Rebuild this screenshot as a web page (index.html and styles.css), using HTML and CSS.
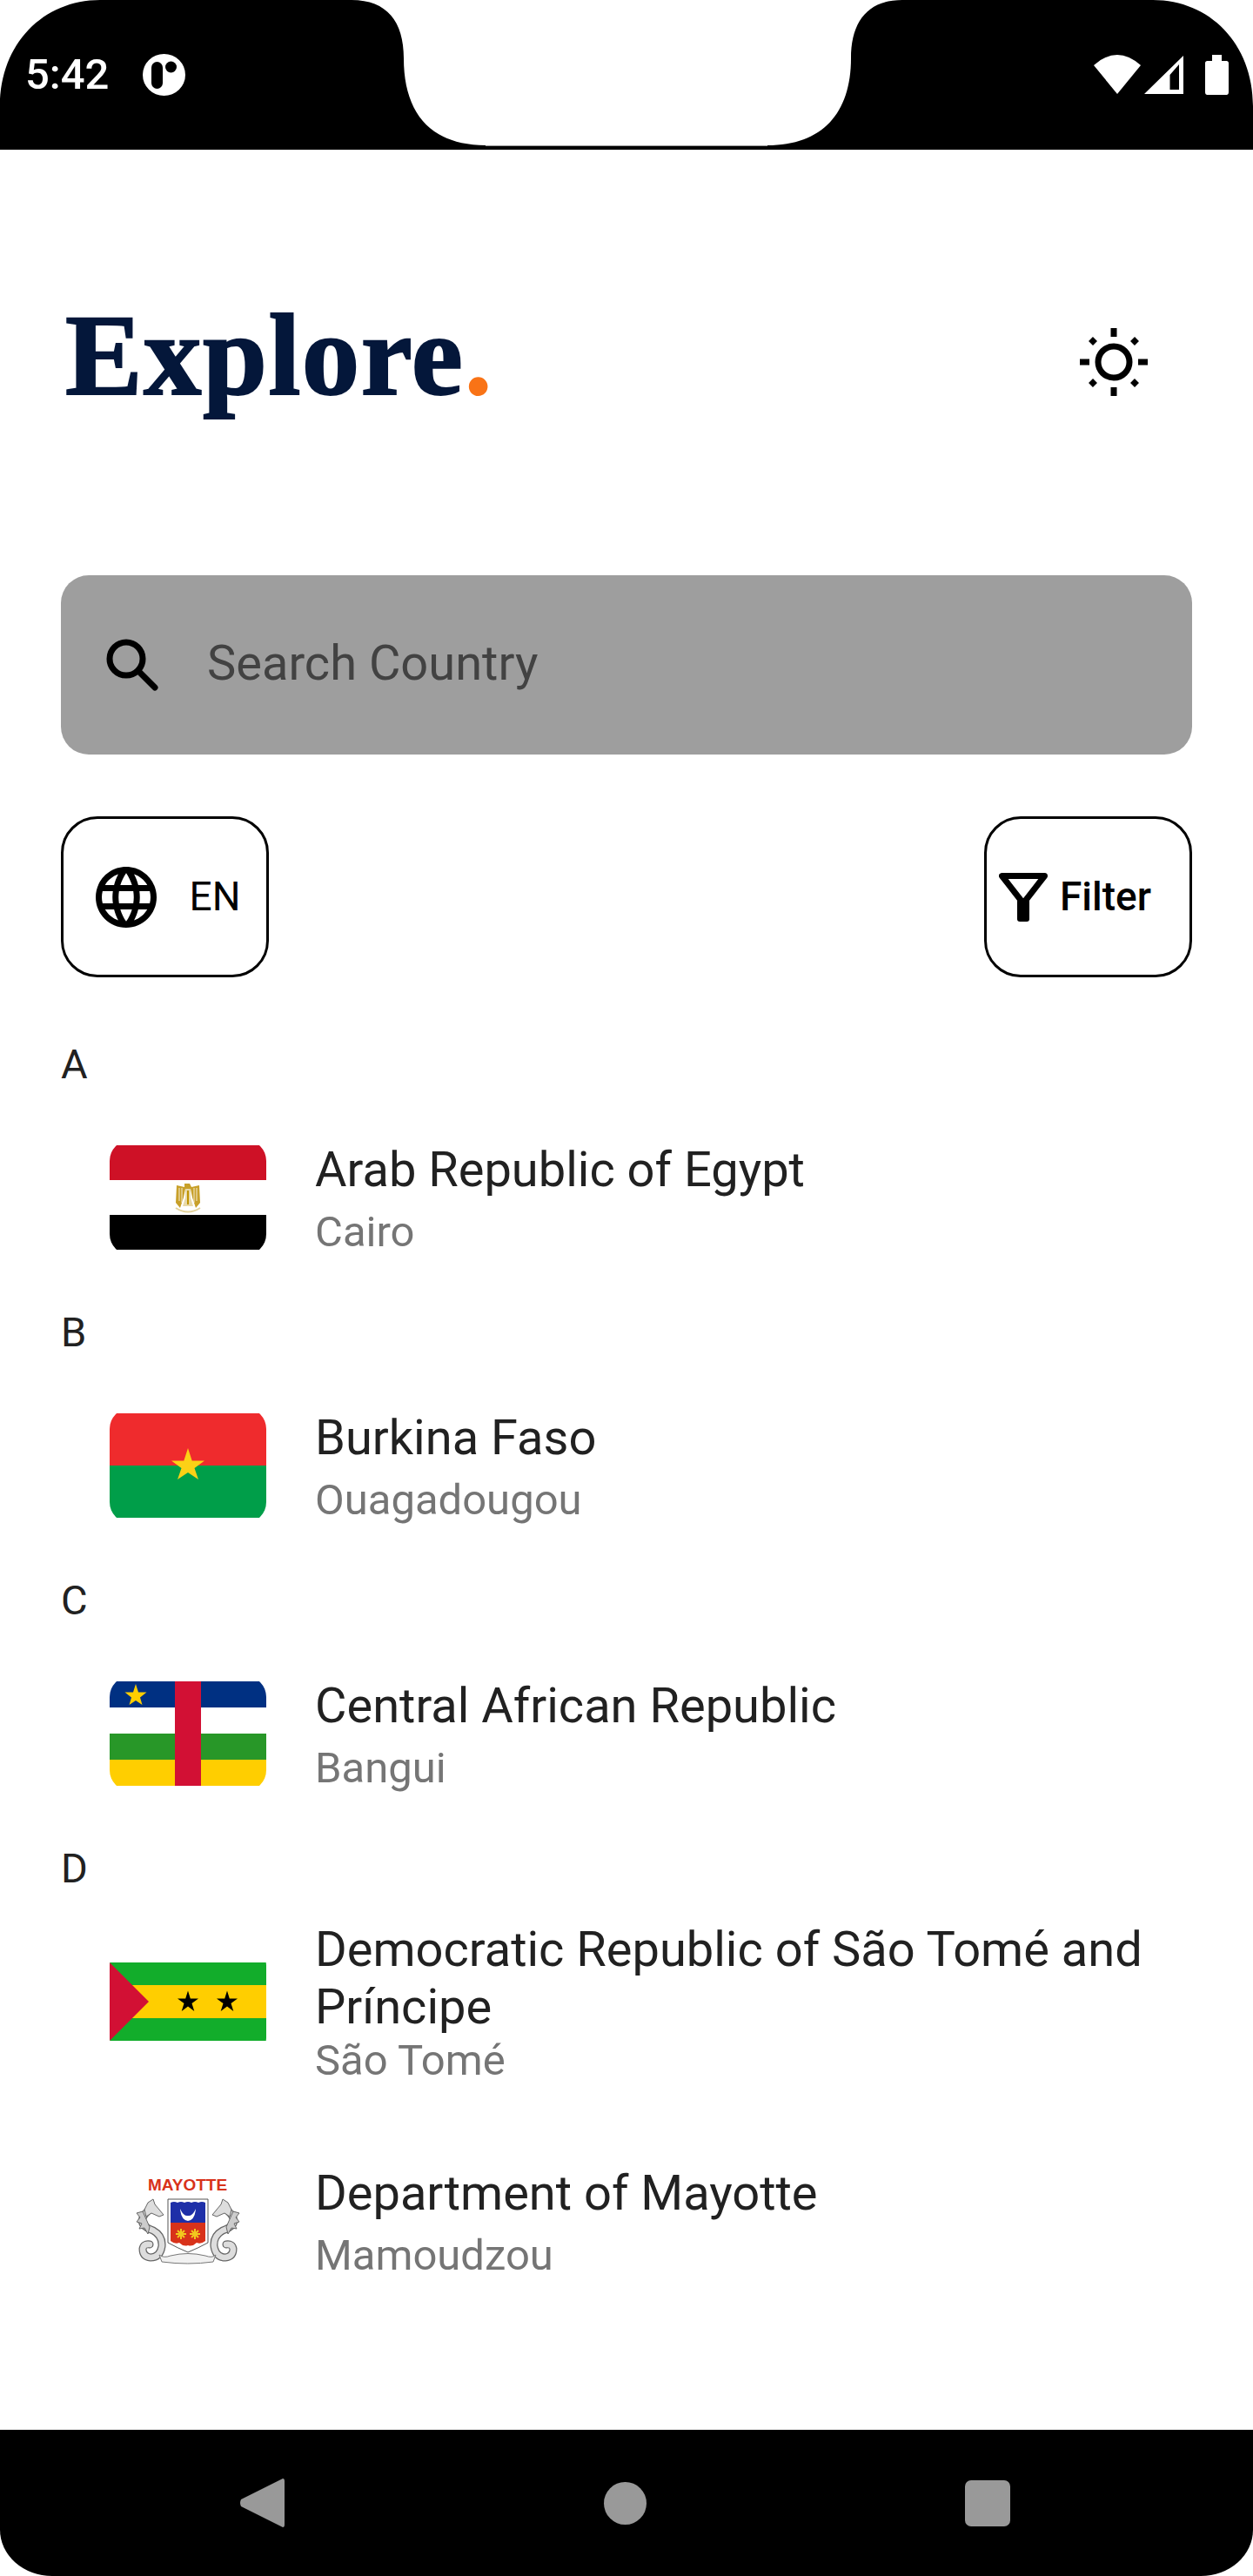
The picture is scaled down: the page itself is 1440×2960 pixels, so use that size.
FILE: index.html
```html
<!DOCTYPE html>
<html lang="en">
<head>
<meta charset="utf-8">
<title>Explore</title>
<link rel="stylesheet" href="styles.css">
</head>
<body>
<div class="screen">
  <header class="statusbar">
    <svg class="status-shape" width="1440" height="172" viewBox="0 0 1440 172"><path fill="#000" d="M0 172V122C0 50 50 0 115 0H404C445 0 464 25 464 67C464 130 495 167 558 167H882C945 167 978 130 978 67C978 25 997 0 1037 0H1325C1390 0 1440 50 1440 122V172Z"/><path fill="none" stroke="#999" stroke-width="1" d="M558 167.5H882"/></svg>
    <div class="status-left">
      <span class="clock">5:42</span>
      <svg class="mini" width="49" height="48" viewBox="0 0 49 48"><ellipse cx="24.500" cy="24" rx="24.500" ry="24" fill="#fff"/><rect x="10" y="9" width="13" height="31" rx="6.500" fill="#000"/><circle cx="32.500" cy="15" r="6.500" fill="#000"/></svg>
    </div>
    <div class="status-right">
      <svg width="54" height="46" viewBox="0 0 54 46"><path fill="#fff" d="M0 12Q27 -12 54 12L27 45Z"/></svg>
      <svg width="45" height="46" viewBox="0 0 45 46"><path fill="#fff" fill-rule="evenodd" d="M45 1V45H0ZM40 11L29.500 23V40H40Z"/></svg>
      <svg class="battery" width="27" height="46" viewBox="0 0 27 46"><path fill="#fff" d="M8 0H19V7H24.500C26 7 27 8 27 9.500V43C27 44.800 26 46 24.500 46H2.500C1 46 0 44.800 0 43V9.500C0 8 1 7 2.500 7H8Z"/></svg>
    </div>
  </header>

  <main class="content">
    <div class="topline">
      <div class="logo">Explore<span class="logo-dot">.</span></div>
      <svg class="sun" width="78" height="78" viewBox="0 0 78 78"><circle cx="39" cy="39" r="18" fill="none" stroke="#000" stroke-width="7"/><path fill="none" stroke="#000" stroke-width="7" d="M39 0V10M39 68V78M0 39H11M67 39H78M12.500 12.500L17.500 17.500M65.500 12.500L60.500 17.500M12.500 65.500L17.500 60.500M65.500 65.500L60.500 60.500"/></svg>
    </div>

    <div class="search">
      <svg class="search-icon" width="60" height="60" viewBox="0 0 60 60"><circle cx="23" cy="23" r="19" fill="none" stroke="#000" stroke-width="7"/><path fill="none" stroke="#000" stroke-width="7" stroke-linecap="round" d="M37 37L56 56"/></svg>
      <span class="search-text">Search Country</span>
    </div>

    <div class="actions">
      <button class="chip chip-lang">
        <svg width="84" height="84" viewBox="0 0 24 24"><path fill="#000" d="M11.990 2C6.470 2 2 6.480 2 12s4.470 10 9.990 10C17.520 22 22 17.520 22 12S17.520 2 11.990 2zm6.930 6h-2.950c-.32-1.250-.78-2.450-1.380-3.560 1.840.63 3.370 1.910 4.330 3.560zM12 4.040c.83 1.200 1.480 2.530 1.910 3.960h-3.820c.43-1.430 1.080-2.760 1.910-3.960zM4.260 14C4.100 13.360 4 12.690 4 12s.1-1.360.26-2h3.380c-.08.660-.14 1.320-.14 2 0 .680.060 1.340.14 2H4.260zm.820 2h2.950c.32 1.250.78 2.450 1.380 3.560-1.840-.63-3.370-1.900-4.330-3.560zm2.950-8H5.080c.96-1.660 2.490-2.930 4.330-3.560C8.810 5.550 8.350 6.750 8.030 8zM12 19.960c-.83-1.200-1.480-2.530-1.910-3.960h3.820c-.43 1.430-1.080 2.760-1.910 3.960zM14.340 14H9.660c-.09-.66-.16-1.320-.16-2 0-.680.070-1.350.16-2h4.680c.09.650.16 1.320.16 2 0 .680-.07 1.340-.16 2zm.250 5.560c.6-1.110 1.060-2.310 1.380-3.560h2.950c-.96 1.650-2.490 2.930-4.330 3.560zM16.360 14c.08-.66.14-1.320.14-2 0-.680-.06-1.340-.14-2h3.380c.16.640.26 1.310.26 2s-.1 1.360-.26 2h-3.380z"/></svg>
        <span class="chip-label">EN</span>
      </button>
      <button class="chip chip-filter">
        <svg width="56" height="56" viewBox="0 0 56 56"><path fill="none" stroke="#000" stroke-width="7" stroke-linejoin="round" d="M3.500 3.500H52.500L28 35Z"/><rect x="21" y="30" width="14" height="26" rx="3" fill="#000"/></svg>
        <span class="chip-label chip-label-strong">Filter</span>
      </button>
    </div>

    <section class="group">
      <div class="letter">A</div>
      <div class="row">
        <svg class="flag" width="180" height="120" viewBox="0 0 180 120"><defs><clipPath id="c1"><rect y="-6" width="180" height="132" rx="24"/></clipPath></defs><g clip-path="url(#c1)"><rect width="180" height="40" fill="#ce1126"/><rect y="40" width="180" height="40" fill="#fff"/><rect y="80" width="180" height="40" fill="#000"/><path fill="#c8a02a" d="M86 44H92L94 48L103 46L104 66L99 72L95 60L93 50H87L85 60L81 72L76 66L77 46L86 48Z"/><path fill="none" stroke="#fff" stroke-width="0.800" d="M80 49V64M83 49V66M97 49V66M100 49V64"/><path fill="#e8d9a8" d="M87 50H93V60L96 70H84L87 60Z"/><path fill="#c09300" d="M89 52H91V68H89Z"/><path fill="none" stroke="#e3d29a" stroke-width="2" d="M76 72Q90 81 104 72"/></g></svg>
        <div class="names">
          <div class="name">Arab Republic of Egypt</div>
          <div class="sub">Cairo</div>
        </div>
      </div>
    </section>

    <section class="group">
      <div class="letter">B</div>
      <div class="row">
        <svg class="flag" width="180" height="120" viewBox="0 0 180 120"><defs><clipPath id="c2"><rect y="-6" width="180" height="132" rx="24"/></clipPath></defs><g clip-path="url(#c2)"><rect width="180" height="60" fill="#ef2b2d"/><rect y="60" width="180" height="60" fill="#009e49"/><path fill="#fcd116" d="M90 40L94.700 54.500H109L97.500 63L102 76L90 68L78 76L82.500 63L71 54.500H85.300Z"/></g></svg>
        <div class="names">
          <div class="name">Burkina Faso</div>
          <div class="sub">Ouagadougou</div>
        </div>
      </div>
    </section>

    <section class="group">
      <div class="letter">C</div>
      <div class="row">
        <svg class="flag" width="180" height="120" viewBox="0 0 180 120"><defs><clipPath id="c3"><rect y="-6" width="180" height="132" rx="24"/></clipPath></defs><g clip-path="url(#c3)"><rect width="180" height="30" fill="#003082"/><rect y="30" width="180" height="30" fill="#fff"/><rect y="60" width="180" height="30" fill="#289728"/><rect y="90" width="180" height="30" fill="#ffce00"/><rect x="75" width="30" height="120" fill="#d21034"/><path fill="#ffce00" d="M30 3L33 12.500H42.500L35 18.500L37.500 27L30 22L22.500 27L25 18.500L17.500 12.500H27Z"/></g></svg>
        <div class="names">
          <div class="name">Central African Republic</div>
          <div class="sub">Bangui</div>
        </div>
      </div>
    </section>

    <section class="group">
      <div class="letter">D</div>
      <div class="row">
        <svg class="flag" width="180" height="120" viewBox="0 0 180 120"><defs><clipPath id="c4"><rect y="-6" width="180" height="132" rx="24"/></clipPath></defs><g clip-path="url(#c4)"><rect y="15" width="180" height="90" fill="#12ad2b"/><rect y="41" width="180" height="38" fill="#ffce00"/><path fill="#d21034" d="M0 15L45 60L0 105Z"/><path fill="#000" d="M90 47.500L92.800 56.500H102L94.500 62L97.300 71L90 65.500L82.700 71L85.500 62L78 56.500H87.200Z"/><path fill="#000" d="M135 47.500L137.800 56.500H147L139.500 62L142.300 71L135 65.500L127.700 71L130.500 62L123 56.500H132.200Z"/></g></svg>
        <div class="names">
          <div class="name">Democratic Republic of São Tomé and Príncipe</div>
          <div class="sub sub-tight">São Tomé</div>
        </div>
      </div>
      <div class="row row-last">
        <svg class="flag" width="180" height="120" viewBox="0 0 180 120">
          <defs>
            <g id="seahorse">
              <path fill="none" stroke="#666" stroke-width="9" stroke-linecap="round" d="M47 43Q38 50 37 57Q38 64 50 68Q61 74 60 86Q58 99 47 99Q38 98 38 89Q39 83 46 84"/>
              <path fill="none" stroke="#ddd" stroke-width="6.500" stroke-linecap="round" d="M47 43Q38 50 37 57Q38 64 50 68Q61 74 60 86Q58 99 47 99Q38 98 38 89Q39 83 46 84"/>
              <path fill="#ddd" stroke="#666" stroke-width="1" d="M50 32L52 38L62 50L57 52L48 48L42 52L40 44L44 36Z"/>
              <path fill="#ccc" stroke="#666" stroke-width="1" d="M38 46L31 48L35 53L31 58L37 60L34 66L40 65L44 72L46 64Z"/>
            </g>
          </defs>
          <g transform="translate(0 3)">
            <text x="89.500" y="22" text-anchor="middle" class="flag-caption">MAYOTTE</text>
            <path fill="#fff" stroke="#555" stroke-width="1" d="M67 32H113V82Q102 88 90 93Q78 88 67 82Z"/>
            <path fill="#1e2fa8" d="M70 36Q74 34 78 36Q82 34 86 36Q90 34 94 36Q98 34 102 36Q106 34 110 36V59H70Z"/>
            <path fill="#d8321a" d="M70 59H110V80Q105 84 100 82Q95 87 90 85Q85 87 80 82Q75 84 70 80Z"/>
            <path fill="#fff" d="M81 43Q85 52 90 51Q95 52 99 43Q98 56 90 57Q82 56 81 43Z"/>
            <g stroke="#f2c81e" stroke-width="2" fill="none"><path d="M76 72H88M82 66V78M78 68L86 76M86 68L78 76"/><path d="M92 72H104M98 66V78M94 68L102 76M102 68L94 76"/></g>
            <use href="#seahorse"/>
            <use href="#seahorse" transform="translate(180 0) scale(-1 1)"/>
            <path fill="#f1f1f1" stroke="#777" stroke-width="1" d="M57 96Q62 100 70 97Q90 92 110 97Q118 100 122 96L119 104Q90 108 60 104Z"/>
          </g>
        </svg>
        <div class="names">
          <div class="name">Department of Mayotte</div>
          <div class="sub">Mamoudzou</div>
        </div>
      </div>
    </section>
  </main>

  <footer class="navbar">
    <svg width="52" height="56" viewBox="0 0 52 56"><path fill="#999" d="M50 0Q52 0 52 3V53Q52 56 50 56L2 32Q0 28 2 24Z"/></svg>
    <span class="nav-home"></span>
    <span class="nav-recent"></span>
  </footer>
</div>
</body>
</html>
```
FILE: styles.css
```css
* { box-sizing: border-box; }
html, body { margin: 0; padding: 0; background: #fff; }
body { font-family: Roboto, "Noto Sans", sans-serif; }
.screen { width: 1440px; height: 2960px; display: flex; flex-direction: column; overflow: hidden; background: #fff; }

.statusbar { height: 172px; flex: none; display: flex; justify-content: space-between; align-items: flex-start; padding: 62px 28px 0 29px; position: relative; }
.status-shape { position: absolute; left: 0; top: 0; }
.status-left, .status-right { position: relative; display: flex; align-items: center; }
.status-left { gap: 39px; height: 48px; }
.status-right { gap: 4px; padding-top: 1px; }
.battery { margin-left: 21px; }
.clock { color: #fff; font-size: 49px; line-height: 48px; font-weight: 500; }

.content { flex: 1; padding: 0 70px; }
.topline { height: 489px; display: flex; justify-content: space-between; align-items: flex-start; padding-top: 170px; }
.logo { font-family: "Liberation Serif", serif; font-weight: 700; font-size: 133px; line-height: 133px; letter-spacing: 1.400px; color: #04173a; -webkit-text-stroke: 2px #04173a; margin-left: 5px; }
.logo-dot { color: #f97316; -webkit-text-stroke: 0; }
.sun { margin: 35px 51px 0 0; }

.search { height: 206px; background: #9e9e9e; border-radius: 32px; display: flex; align-items: center; padding-left: 52px; }
.search-icon { flex: none; }
.search-text { font-size: 56px; line-height: 66px; color: #424242; margin-left: 56px; margin-top: -4px; }

.actions { display: flex; justify-content: space-between; margin-top: 71px; margin-bottom: 70px; }
.chip { height: 185px; width: 239px; background: #fff; border: 3.500px solid #000; border-radius: 42px; display: flex; align-items: center; padding: 0; color: #000; font-family: inherit; }
.chip-lang { padding-left: 29.500px; }
.chip-filter { padding-left: 14px; gap: 14px; }
.chip-label { font-size: 46px; line-height: 54px; margin-top: -2px; }
.chip-lang .chip-label { margin-left: 31px; }
.chip-label-strong { font-weight: 500; }

.letter { font-size: 47px; line-height: 58px; height: 58px; padding-top: 1px; color: #212121; }
.row { height: 250px; display: flex; align-items: center; padding-left: 56px; gap: 56px; }
.row-last { padding-top: 4px; }
.flag { flex: none; }
.flag-caption { font-family: "Liberation Sans", sans-serif; font-weight: 700; font-size: 19px; fill: #d8321a; }
.names { flex: 1; min-width: 0; padding-top: 4px; }
.name { font-size: 56px; line-height: 66px; color: #212121; }
.sub { font-size: 49px; line-height: 58px; color: #757575; margin-top: 10px; }
.sub-tight { margin-top: 0; }

.navbar { height: 168px; flex: none; background: #000; border-radius: 0 0 60px 60px / 0 0 53px 53px; display: flex; align-items: center; padding: 0 279px 0 275px; justify-content: space-between; }
.nav-home { width: 49px; height: 49px; border-radius: 50%; background: #999; }
.nav-recent { width: 52px; height: 53px; border-radius: 7px; background: #999; }
```
